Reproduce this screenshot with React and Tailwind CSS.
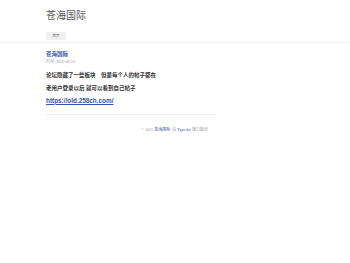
import React from "react";

export default function App() {
  const cjk = { fontFamily: '"Liberation Serif", "Noto Sans CJK SC", serif' };
  const sans = { fontFamily: '"Liberation Sans", "Noto Sans CJK SC", sans-serif' };

  return (
    <div className="min-h-screen w-full bg-white text-[#444]" style={cjk}>
      {/* Header */}
      <header className="border-b border-[#f2f2f2]">
        <div className="pl-[46px] pt-[11px]">
          <div className="text-[10px] leading-[10px] text-[#555]">苍海国际</div>
          <div className="mt-[11px] pb-[2px] flex">
            <span className="block w-[20px] h-[8px] bg-[#f0f0f0] text-[3.5px] leading-[8px] text-center text-[#555]">
              首页
            </span>
          </div>
        </div>
      </header>

      {/* Post */}
      <main className="pl-[46px] w-[216px]">
        <h2 className="mt-[8px] text-[5.5px] leading-[6px] font-bold text-[#3354aa]">苍海国际</h2>
        <div className="mt-[3px] text-[4px] leading-[4px] text-[#999]">时间: 2025-08-18</div>

        <h3 className="mt-[7.5px] text-[5.5px] leading-[6px] font-bold text-[#333] whitespace-pre">
          论坛隐藏了一些板块　但是每个人的帖子都在
        </h3>
        <h3 className="mt-[7px] text-[5.5px] leading-[6px] font-bold text-[#333]">
          老用户登录以后 就可以看到自己帖子
        </h3>
        <h2 className="mt-[6px] text-[6.4px] leading-[8px] font-bold" style={sans}>
          <a href="#" className="text-[#3354aa] underline">https://old.258ch.com/</a>
        </h2>

        <div className="mt-[9.5px] border-t border-[#eeeeee]" />
      </main>

      {/* Footer */}
      <footer className="mt-[12.5px] text-center text-[4px] leading-[4px] text-[#999]">
        © 2025 <a href="#" className="text-[#3354aa]">苍海国际</a>. 由 <a href="#" className="text-[#3354aa]">Typecho</a> 强力驱动.
      </footer>
    </div>
  );
}
